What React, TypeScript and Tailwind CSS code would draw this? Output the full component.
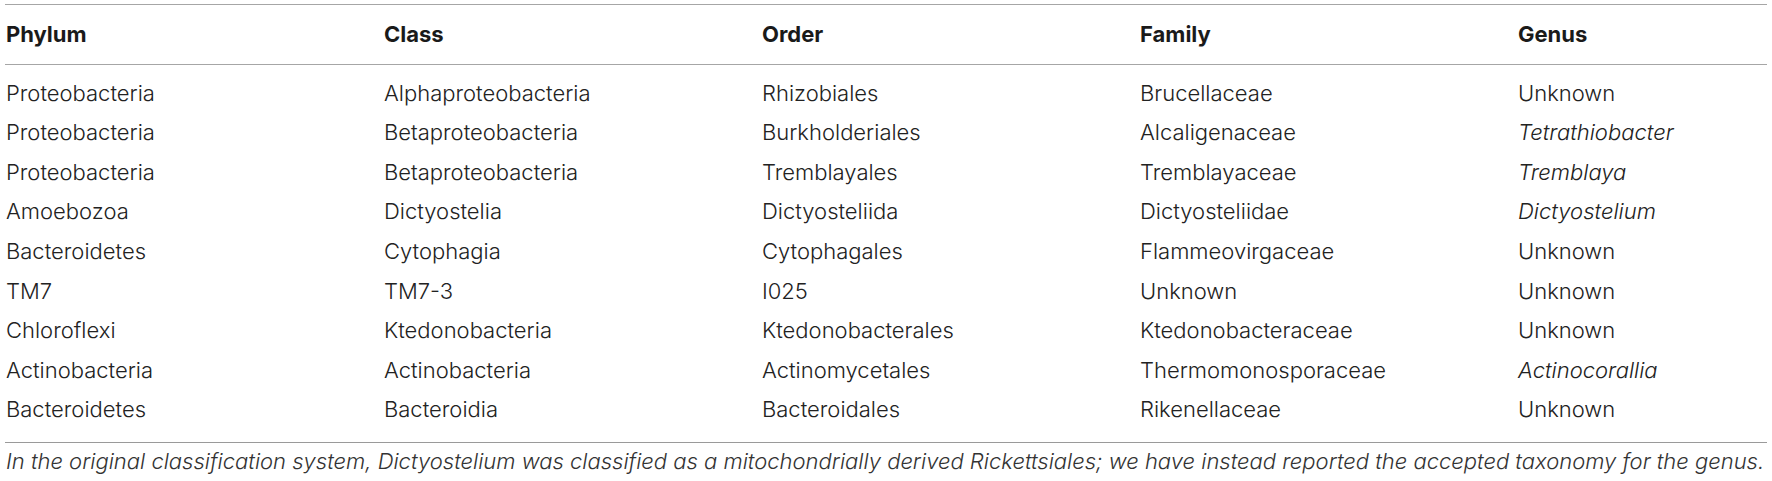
const COLS = "grid grid-cols-[378px_378px_378px_378px_1fr]";

type Cell = { text: string; italic?: boolean };

const HEAD = ["Phylum", "Class", "Order", "Family", "Genus"];

const ROWS: Cell[][] = [
  [{ text: "Proteobacteria" }, { text: "Alphaproteobacteria" }, { text: "Rhizobiales" }, { text: "Brucellaceae" }, { text: "Unknown" }],
  [{ text: "Proteobacteria" }, { text: "Betaproteobacteria" }, { text: "Burkholderiales" }, { text: "Alcaligenaceae" }, { text: "Tetrathiobacter", italic: true }],
  [{ text: "Proteobacteria" }, { text: "Betaproteobacteria" }, { text: "Tremblayales" }, { text: "Tremblayaceae" }, { text: "Tremblaya", italic: true }],
  [{ text: "Amoebozoa" }, { text: "Dictyostelia" }, { text: "Dictyosteliida" }, { text: "Dictyosteliidae" }, { text: "Dictyostelium", italic: true }],
  [{ text: "Bacteroidetes" }, { text: "Cytophagia" }, { text: "Cytophagales" }, { text: "Flammeovirgaceae" }, { text: "Unknown" }],
  [{ text: "TM7" }, { text: "TM7-3" }, { text: "I025" }, { text: "Unknown" }, { text: "Unknown" }],
  [{ text: "Chloroflexi" }, { text: "Ktedonobacteria" }, { text: "Ktedonobacterales" }, { text: "Ktedonobacteraceae" }, { text: "Unknown" }],
  [{ text: "Actinobacteria" }, { text: "Actinobacteria" }, { text: "Actinomycetales" }, { text: "Thermomonosporaceae" }, { text: "Actinocorallia", italic: true }],
  [{ text: "Bacteroidetes" }, { text: "Bacteroidia" }, { text: "Bacteroidales" }, { text: "Rikenellaceae" }, { text: "Unknown" }],
];

export default function App() {
  return (
    <div className="w-[1772px] h-[481px] bg-white pt-[4px] pl-[5px] pr-[5px] font-['Inter',sans-serif] text-[22px] overflow-hidden">
      {/* header */}
      <div className={`${COLS} border-t border-[#a6a6a6] border-b pt-[10px] pb-[9px]`}>
        {HEAD.map((h) => (
          <div key={h} className="pl-px leading-[39.6px] font-bold text-[#1a1a1a]">
            {h}
          </div>
        ))}
      </div>

      {/* body */}
      <div className="border-b border-[#9a9a9a] pt-[9px] pb-[12px]">
        {ROWS.map((row, i) => (
          <div key={i} className={COLS}>
            {row.map((c, j) => (
              <div
                key={j}
                className={`pl-px leading-[39.6px] font-light text-[#222] ${c.italic ? "italic" : ""}`}
              >
                {c.text}
              </div>
            ))}
          </div>
        ))}
      </div>

      {/* footnote */}
      <p className="pl-px pt-[3px] leading-[30px] italic font-light text-[#333] whitespace-nowrap">
        In the original classification system, <span>Dictyostelium</span> was classified as a mitochondrially
        derived Rickettsiales; we have instead reported the accepted taxonomy for the genus.
      </p>
    </div>
  );
}
